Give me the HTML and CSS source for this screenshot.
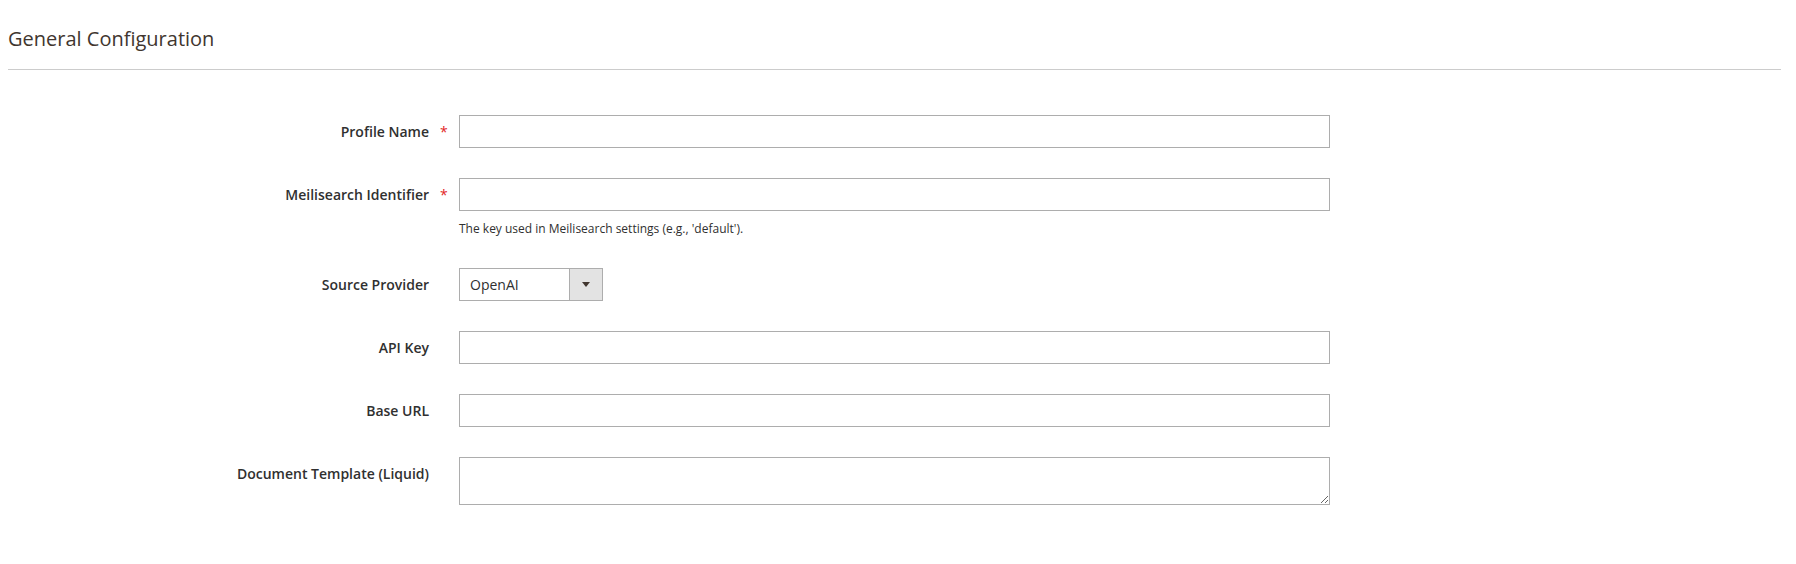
FILE: index.html
```html
<!DOCTYPE html>
<html lang="en">
<head>
<meta charset="utf-8">
<title>General Configuration</title>
<link rel="stylesheet" href="styles.css">
</head>
<body>
<div class="page">
  <div class="section-head">
    <h2 class="section-title">General Configuration</h2>
  </div>
  <form class="form">
    <div class="field">
      <label class="field-label required" for="profile">Profile Name</label>
      <div class="field-control">
        <input class="text-input" id="profile" type="text">
      </div>
    </div>
    <div class="field">
      <label class="field-label required" for="identifier">Meilisearch Identifier</label>
      <div class="field-control">
        <input class="text-input" id="identifier" type="text">
        <div class="note">The key used in Meilisearch settings (e.g., 'default').</div>
      </div>
    </div>
    <div class="field">
      <label class="field-label" for="provider">Source Provider</label>
      <div class="field-control">
        <div class="select-wrap">
          <select class="select" id="provider">
            <option>OpenAI</option>
          </select>
        </div>
      </div>
    </div>
    <div class="field">
      <label class="field-label" for="apikey">API Key</label>
      <div class="field-control">
        <input class="text-input" id="apikey" type="text">
      </div>
    </div>
    <div class="field">
      <label class="field-label" for="baseurl">Base URL</label>
      <div class="field-control">
        <input class="text-input" id="baseurl" type="text">
      </div>
    </div>
    <div class="field">
      <label class="field-label" for="template">Document Template (Liquid)</label>
      <div class="field-control">
        <textarea class="textarea" id="template"></textarea>
      </div>
    </div>
  </form>
</div>
</body>
</html>
```

FILE: styles.css
```css
* {
  box-sizing: border-box;
}

html, body {
  margin: 0;
  padding: 0;
  background: #ffffff;
}

body {
  font-family: "Open Sans", "Liberation Sans", sans-serif;
  color: #303030;
}

.page {
  padding: 0 15px 0 8px;
}

.section-head {
  padding-top: 25px;
  padding-bottom: 16px;
  border-bottom: 1px solid #cccccc;
}

.section-title {
  margin: 0;
  font-size: 20px;
  line-height: 28px;
  font-weight: 400;
  color: #41362f;
}

.form {
  padding-top: 45px;
}

.field {
  display: grid;
  grid-template-columns: 421px 871px;
  column-gap: 30px;
  margin-bottom: 30px;
}

.field-label {
  position: relative;
  justify-self: end;
  padding-top: 7px;
  font-size: 14px;
  line-height: 19px;
  font-weight: 600;
  color: #303030;
  text-align: right;
}

.field-label.required::after {
  content: "*";
  position: absolute;
  left: calc(100% + 11px);
  top: 7px;
  font-size: 14px;
  line-height: 19px;
  font-weight: 400;
  color: #e22626;
}

.text-input {
  display: block;
  width: 100%;
  height: 33px;
  margin: 0;
  padding: 6px 10px;
  border: 1px solid #adadad;
  border-radius: 0;
  background: #ffffff;
  font-family: inherit;
  font-size: 14px;
  color: #303030;
  outline: none;
}

.note {
  margin-top: 9px;
  font-size: 12px;
  line-height: 18px;
  color: #303030;
}

.select-wrap {
  position: relative;
  width: 144px;
  height: 33px;
}

.select {
  -webkit-appearance: none;
  appearance: none;
  display: block;
  width: 100%;
  height: 33px;
  margin: 0;
  padding: 0 40px 0 10px;
  border: 1px solid #adadad;
  border-radius: 0;
  background: #ffffff;
  font-family: inherit;
  font-size: 14px;
  line-height: 31px;
  color: #303030;
  outline: none;
}

.select-wrap::after {
  content: "";
  position: absolute;
  top: 1px;
  right: 1px;
  width: 32px;
  height: 31px;
  background: #e3e3e3;
  border-left: 1px solid #adadad;
  pointer-events: none;
}

.select-wrap::before {
  content: "";
  position: absolute;
  z-index: 1;
  top: 14px;
  right: 13px;
  width: 0;
  height: 0;
  border-left: 4px solid transparent;
  border-right: 4px solid transparent;
  border-top: 5px solid #41362f;
  pointer-events: none;
}

.textarea {
  display: block;
  width: 100%;
  height: 48px;
  margin: 0;
  padding: 6px 10px;
  border: 1px solid #adadad;
  border-radius: 0;
  background: #ffffff;
  font-family: inherit;
  font-size: 14px;
  color: #303030;
  resize: both;
  outline: none;
}
```
